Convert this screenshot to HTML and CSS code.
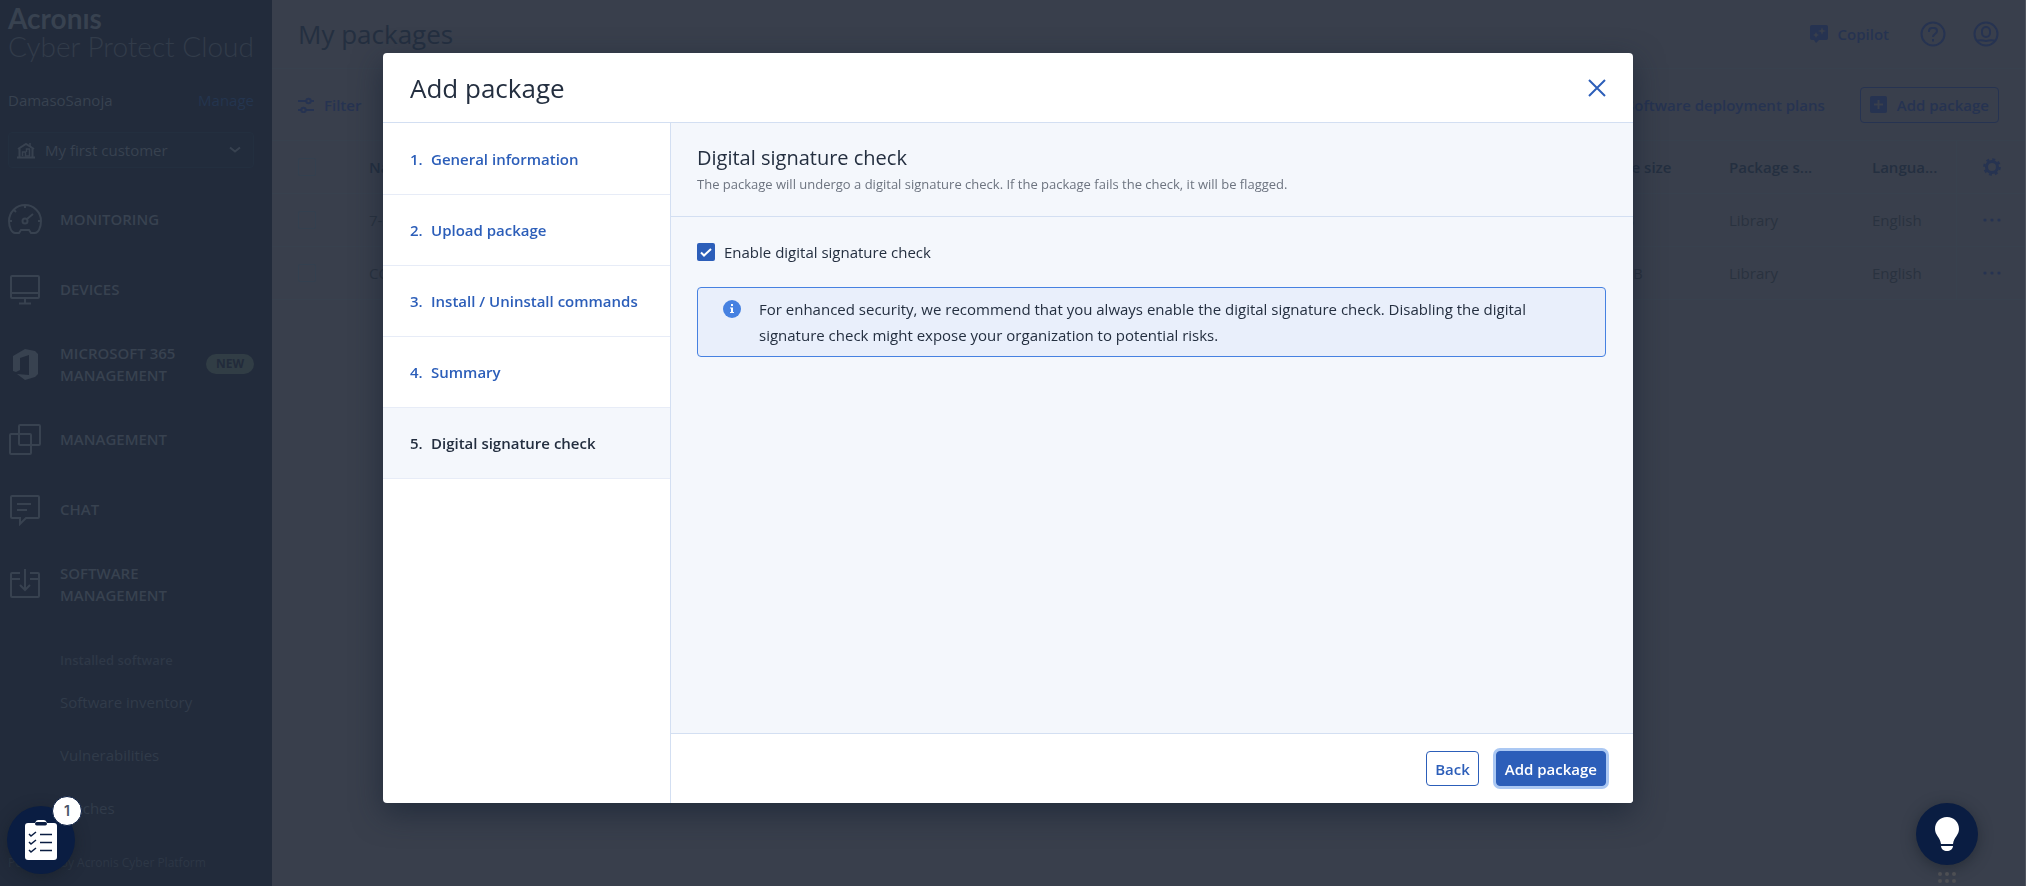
FILE: index.html
```html
<!DOCTYPE html>
<html lang="en">
<head>
<meta charset="utf-8">
<title>Add package</title>
<link rel="stylesheet" href="styles.css">
</head>
<body>
<div class="app">
  <aside class="sidebar">
    <div class="logo">
      <span class="logo-brand">Acronıs</span>
      <span class="logo-product">Cyber Protect Cloud</span>
    </div>
    <div class="account"><span>DamasoSanoja</span><a class="account-link" href="#">Manage</a></div>
    <button class="tenant" type="button">
      <svg width="18" height="18" viewBox="0 0 18 18" fill="none" stroke="currentColor" stroke-width="2"><path d="M1 8 9 3l8 5M2.500 7v9M15.500 7v9M0 16.500h18"/><path stroke-width="1.500" d="M13 2v3M5.500 15v-4h3v4M9.500 11V8h3v7M8 15h5"/></svg>
      <span class="tenant-name">My first customer</span>
      <svg width="12" height="8" viewBox="0 0 12 8" fill="none" stroke="currentColor" stroke-width="2"><path d="m1 1.500 5 4 5-4"/></svg>
    </button>
    <nav class="nav">
      <a class="nav-item" href="#">
        <svg class="nav-icon" viewBox="0 0 34 34"><path d="M7 31h4l2-3h8l2 3h4c3 0 6-5 6-12a16 16 0 0 0-32 0c0 7 3 12 6 12zM17 3v3M1 19h3M30 19h3M6 8l2 2M19 17l6-5"/><circle cx="17" cy="19" r="2.500"/></svg>
        <span>MONITORING</span></a>
      <a class="nav-item" href="#">
        <svg class="nav-icon" viewBox="0 0 34 34"><rect x="3" y="4" width="28" height="22" rx="1"/><path d="M3 21h28M17 26v5M11 31.500h12"/></svg>
        <span>DEVICES</span></a>
      <a class="nav-item" href="#">
        <svg class="nav-icon nav-icon-solid" viewBox="0 0 34 34"><path d="m17 2 10 2 3 3v20l-3 3-10 3-8-6 12 1V8l-9 3v12l-4 2-3-1V9z"/></svg>
        <span class="nav-label">MICROSOFT 365 MANAGEMENT</span><span class="tag">NEW</span></a>
      <a class="nav-item" href="#">
        <svg class="nav-icon" viewBox="0 0 34 34"><rect x="11" y="3" width="21" height="20" rx="1"/><rect x="2" y="12" width="21" height="20" rx="1"/></svg>
        <span>MANAGEMENT</span></a>
      <a class="nav-item" href="#">
        <svg class="nav-icon" viewBox="0 0 34 34"><path d="M4 4h26a1 1 0 0 1 1 1v20a1 1 0 0 1-1 1H18l-6 6v-6H4a1 1 0 0 1-1-1V5a1 1 0 0 1 1-1zM9 12h14M9 18h10"/></svg>
        <span>CHAT</span></a>
      <a class="nav-item" href="#">
        <svg class="nav-icon" viewBox="0 0 34 34"><path d="M12 6H4a1 1 0 0 0-1 1v22a1 1 0 0 0 1 1h26a1 1 0 0 0 1-1V7a1 1 0 0 0-1-1h-8M3 12h9M22 12h9M17 2v21M12 18l5 5 5-5"/></svg>
        <span class="nav-label">SOFTWARE MANAGEMENT</span></a>
    </nav>
    <div class="subnav">
      <h2 class="subnav-title">Installed software</h2>
      <a class="subnav-item" href="#">Software inventory</a>
      <a class="subnav-item" href="#">Vulnerabilities</a>
      <a class="subnav-item" href="#">Patches</a>
    </div>
    <p class="powered">Powered by Acronis Cyber Platform</p>
  </aside>

  <main class="main">
    <header class="topbar">
      <h1 class="page-title">My packages</h1>
      <button class="link-button" type="button">
        <svg width="18" height="18" viewBox="0 0 18 18"><path fill="currentColor" d="M2 0h14a2 2 0 0 1 2 2v11a2 2 0 0 1-2 2H9l-3 3-2-3H2a2 2 0 0 1-2-2V2a2 2 0 0 1 2-2z"/><path class="cutout" d="m12 2 1 3 3 1-3 1-1 3-1-3-3-1 3-1zM6 7l1 2 2 1-2 1-1 2-1-2-2-1 2-1z"/></svg>
        Copilot
      </button>
      <button class="icon-button" type="button" aria-label="Help">
        <svg width="26" height="26" viewBox="0 0 26 26" fill="none" stroke="currentColor" stroke-width="2"><circle cx="13" cy="13" r="11.500"/><path d="M9 11V9.500A3 3 0 0 1 12 7h2a3 3 0 0 1 3 3c0 3-4 3-4 6M13 18v2.500"/></svg>
      </button>
      <button class="icon-button" type="button" aria-label="Profile">
        <svg width="26" height="26" viewBox="0 0 26 26" fill="none" stroke="currentColor" stroke-width="2"><circle cx="13" cy="13" r="11.500"/><rect x="9" y="6" width="8" height="10" rx="4"/><path d="M4 20c4-2 6 0 9 0s5-2 9 0"/></svg>
      </button>
    </header>
    <div class="toolbar">
      <button class="link-button" type="button">
        <svg width="16" height="16" viewBox="0 0 16 16" fill="none" stroke="currentColor" stroke-width="2"><path d="M0 4h8M13 4h3M0 13h3M8 13h8"/><circle cx="10.500" cy="4" r="2.200"/><circle cx="5.500" cy="13" r="2.200"/></svg>
        Filter
      </button>
      <a class="toolbar-link" href="#">Software deployment plans</a>
      <button class="outline-button" type="button">
        <svg width="17" height="17" viewBox="0 0 17 17"><rect width="17" height="17" rx="2" fill="currentColor"/><path class="cutout-line" d="M8.500 4v9M4 8.500h9"/></svg>
        Add package
      </button>
    </div>
    <table class="packages">
      <thead>
        <tr><th class="col-check"><input class="check" type="checkbox" aria-label="Select all"></th><th>Name</th><th class="col-size">Archive size</th><th class="col-meta">Package s...</th><th class="col-lang">Langua...</th>
        <th class="col-actions"><button class="icon-button" type="button" aria-label="Columns"><svg width="18" height="18" viewBox="0 0 18 18" fill="none" stroke="currentColor"><circle cx="9" cy="9" r="5.500" stroke-width="3"/><circle cx="9" cy="9" r="7.800" stroke-width="2" stroke-dasharray="3 3.126"/></svg></button></th></tr>
      </thead>
      <tbody>
        <tr><td><input class="check" type="checkbox" aria-label="Select 7-Zip"></td><td>7-Zip</td><td>1.5 MB</td><td>Library</td><td>English</td><td class="col-actions"><button class="icon-button" type="button" aria-label="More"><svg width="18" height="4" viewBox="0 0 18 4" fill="currentColor"><circle cx="2" cy="2" r="1.600"/><circle cx="9" cy="2" r="1.600"/><circle cx="16" cy="2" r="1.600"/></svg></button></td></tr>
        <tr><td><input class="check" type="checkbox" aria-label="Select CCleaner"></td><td>CCleaner</td><td>69.1 MB</td><td>Library</td><td>English</td><td class="col-actions"><button class="icon-button" type="button" aria-label="More"><svg width="18" height="4" viewBox="0 0 18 4" fill="currentColor"><circle cx="2" cy="2" r="1.600"/><circle cx="9" cy="2" r="1.600"/><circle cx="16" cy="2" r="1.600"/></svg></button></td></tr>
      </tbody>
    </table>
  </main>
</div>

<div class="overlay">
  <section class="dialog" role="dialog" aria-labelledby="dialog-title">
    <header class="dialog-header">
      <h2 class="dialog-title" id="dialog-title">Add package</h2>
      <button class="close" type="button" aria-label="Close"><svg width="18" height="18" viewBox="0 0 18 18" fill="none" stroke="currentColor" stroke-width="2"><path d="m1 1 16 16M17 1 1 17"/></svg></button>
    </header>
    <div class="dialog-body">
      <nav class="steps">
        <a class="step" href="#"><span class="step-number">1.</span>General information</a>
        <a class="step" href="#"><span class="step-number">2.</span>Upload package</a>
        <a class="step" href="#"><span class="step-number">3.</span>Install / Uninstall commands</a>
        <a class="step" href="#"><span class="step-number">4.</span>Summary</a>
        <a class="step step-current" href="#" aria-current="step"><span class="step-number">5.</span>Digital signature check</a>
      </nav>
      <div class="panel">
        <header class="panel-header">
          <h3 class="panel-title">Digital signature check</h3>
          <p class="panel-hint">The package will undergo a digital signature check. If the package fails the check, it will be flagged.</p>
        </header>
        <div class="panel-content">
          <label class="option"><span class="option-box"><input class="option-input" type="checkbox" checked><svg class="option-mark" width="18" height="18" viewBox="0 0 18 18"><path d="m4 9.500 3 3L14 6"/></svg></span>Enable digital signature check</label>
          <div class="notice">
            <svg class="notice-icon" width="18" height="18" viewBox="0 0 18 18"><circle cx="9" cy="9" r="9" fill="#4681e1"/><path fill="#fff" d="M8 4h2v2H8zM7 7.500h3V12h1v1H7v-1h1V8.500H7z"/></svg>
            <p>For enhanced security, we recommend that you always enable the digital signature check. Disabling the digital signature check might expose your organization to potential risks.</p>
          </div>
        </div>
        <footer class="panel-footer">
          <button class="button" type="button">Back</button>
          <button class="button button-primary" type="button">Add package</button>
        </footer>
      </div>
    </div>
  </section>
</div>

<button class="fab fab-tasks" type="button" aria-label="Checklist">
  <svg width="32" height="40" viewBox="0 0 32 40"><rect y="3" width="32" height="37" rx="3" fill="#fff"/><path d="M8 6V4q0-1 2-1 1-3 3-3h6q2 0 3 3 2 0 2 1v2z" fill="#fff"/><rect x="10" y="2" width="12" height="3.500" rx="1.700" fill="#0a1d42"/><path d="M15 14.500h12M15 22.500h12M15 30.500h12M4 14l2 2 5-4M4 22l2 2 5-4M4 30l2 2 5-4" fill="none" stroke="#0a1d42" stroke-width="1.500"/></svg>
  <span class="fab-count">1</span>
</button>
<button class="fab fab-tips" type="button" aria-label="Tips">
  <svg width="24" height="34" viewBox="0 0 24 34"><path fill="#fff" d="M12 0c7 0 12 5 12 12 0 6-5 8-6 15H6C5 20 0 18 0 12 0 5 5 0 12 0zM6 29h12c0 3-3 5-6 5s-6-2-6-5z"/></svg>
</button>
<svg class="grip" width="18" height="11" viewBox="0 0 18 11" fill="#4d4f53"><circle cx="2" cy="2" r="2"/><circle cx="9" cy="2" r="2"/><circle cx="16" cy="2" r="2"/><circle cx="2" cy="9" r="2"/><circle cx="9" cy="9" r="2"/><circle cx="16" cy="9" r="2"/></svg>
</body>
</html>
```
FILE: styles.css
```css
* { box-sizing: border-box; }

body {
  margin: 0;
  height: 100vh;
  overflow: hidden;
  font: 15px/22px "Open Sans", "Noto Sans", sans-serif;
  color: #242f40;
  background: #393f4c;
}

h1, h2, h3, p { margin: 0; font-weight: 400; }
a { color: inherit; text-decoration: none; }
button { font: inherit; color: inherit; background: none; border: 0; padding: 0; }
svg { display: block; flex: none; }

.app { display: flex; height: 100vh; }

/* Sidebar */
.sidebar {
  width: 272px;
  flex: none;
  display: flex;
  flex-direction: column;
  padding: 4px 18px 12px 8px;
  background: #222b3b;
  color: #384250;
}
.logo { display: flex; flex-direction: column; font-family: Lato, sans-serif; }
.logo-brand { font-size: 28px; line-height: 28px; font-weight: 700; }
.logo-product { font-size: 28px; line-height: 28px; font-weight: 300; color: #323c4a; white-space: nowrap; }
.account { display: flex; justify-content: space-between; padding: 29px 0 21px; }
.account-link { color: #24354f; }
.tenant {
  display: flex;
  align-items: center;
  gap: 10px;
  height: 36px;
  padding: 0 12px 0 8px;
  border: 1px solid #232f3f;
  border-radius: 4px;
  background: #222c3c;
}
.tenant-name { flex: 1; text-align: left; }
.nav { display: flex; flex-direction: column; padding-top: 16px; font-weight: 600; }
.nav-item { display: flex; align-items: center; gap: 18px; min-height: 70px; padding: 18px 0; }
.nav-icon { width: 34px; height: 34px; fill: none; stroke: currentColor; stroke-width: 2; }
.nav-icon-solid { fill: currentColor; stroke: none; }
.nav-label { flex: 1; max-width: 140px; }
.tag {
  padding: 0 10px;
  border-radius: 10px;
  background: #313d45;
  color: #222b3b;
  font-size: 12px;
  line-height: 20px;
  font-weight: 700;
}
.subnav { display: flex; flex-direction: column; padding: 24px 0 0 52px; color: #313b4a; }
.subnav-title { font-size: 13px; line-height: 24px; font-weight: 600; padding-bottom: 4px; color: #2e3847; }
.subnav-item { line-height: 53px; }
.powered { margin-top: auto; font-size: 12px; color: #2d3746; }

/* Page behind the dialog */
.main { flex: 1; min-width: 0; border-right: 1px solid #50555f; }
.topbar { display: flex; align-items: center; gap: 27px; height: 69px; padding: 0 26px; border-bottom: 1px solid #38414e; color: #263351; }
.page-title { flex: 1; font-size: 26px; line-height: 36px; color: #242f40; }
.link-button { display: flex; align-items: center; gap: 10px; font-weight: 600; color: #263351; }
.topbar .link-button { margin-right: 4px; }
.cutout { fill: #393f4c; }
.cutout-line { fill: none; stroke: #393f4c; stroke-width: 2; }
.toolbar { display: flex; align-items: center; gap: 35px; height: 71px; padding: 0 26px; color: #263351; font-weight: 600; }
.toolbar-link { margin-left: auto; }
.outline-button { display: flex; align-items: center; gap: 10px; height: 36px; padding: 0 9px; border: 1px solid #263351; border-radius: 4px; }
.packages { width: 100%; table-layout: fixed; border-collapse: collapse; border-top: 1px solid #38414e; }
.packages th, .packages td { height: 53px; padding: 0; text-align: left; border-bottom: 1px solid #38414e; }
.packages th { font-weight: 600; }
.packages td { color: #29323f; }
.packages th:first-child, .packages td:first-child { padding-left: 26px; }
.col-check { width: 97px; }
.col-size, .col-meta { width: 143px; }
.col-lang { width: 84px; }
.packages .col-actions { width: 69px; padding-left: 26px; border-left: 1px solid #38414e; color: #263351; }
.packages .icon-button { display: block; }
.check { appearance: none; display: block; width: 18px; height: 18px; margin: 0; border: 1px solid #34404f; border-radius: 2px; }

/* Dialog */
.overlay { position: fixed; inset: 0; padding: 53px 10px 20px 0; }
.dialog {
  display: flex;
  flex-direction: column;
  max-width: 1250px;
  min-height: 750px;
  margin: 0 auto;
  border-radius: 4px;
  overflow: hidden;
  background: #fff;
  box-shadow: 0 10px 30px rgba(20, 32, 48, .6);
}
.dialog-header { display: flex; align-items: center; justify-content: space-between; height: 70px; padding: 0 27px; border-bottom: 1px solid #d3dff2; }
.dialog-title { font-size: 26px; line-height: 36px; }
.close { color: #2c5eb9; }
.dialog-body { flex: 1; display: flex; }
.steps { width: 288px; flex: none; border-right: 1px solid #d3dff2; font-weight: 600; color: #2c5eb9; }
.step { display: flex; align-items: center; height: 71px; padding: 0 27px; border-bottom: 1px solid #e7ecf7; white-space: nowrap; }
.step:first-child { height: 72px; }
.step-number { flex: none; width: 21px; }
.step-current { background: #f4f7fc; color: #242f40; }
.panel { flex: 1; display: flex; flex-direction: column; background: #f4f7fc; }
.panel-header { padding: 21px 27px 20px 26px; border-bottom: 1px solid #d3dff2; }
.panel-title { font-size: 20px; line-height: 28px; }
.panel-hint { font-size: 13px; line-height: 24px; color: #6d7480; }
.panel-content { flex: 1; padding: 24px 27px 24px 26px; }
.option { display: flex; align-items: center; gap: 9px; }
.option-box { position: relative; }
.option-input { appearance: none; display: block; width: 18px; height: 18px; margin: 0; border-radius: 2px; background: #2c5eb9; }
.option-mark { position: absolute; inset: 0; fill: none; stroke: #fff; stroke-width: 2; pointer-events: none; }
.notice {
  display: flex;
  gap: 18px;
  margin-top: 24px;
  padding: 8px 25px;
  border: 1px solid #4681e1;
  border-radius: 4px;
  background: #e9effb;
  line-height: 26px;
}
.notice-icon { margin-top: 4px; }
.panel-footer { display: flex; justify-content: flex-end; gap: 17px; padding: 17px 27px; background: #fff; border-top: 1px solid #d3dff2; }
.button { height: 35px; padding: 0 8px; border: 1px solid #2c5eb9; border-radius: 4px; color: #2c5eb9; font-weight: 600; }
.button-primary { background: #2c5eb9; color: #fff; box-shadow: 0 0 0 3px #abc8f3; }

/* Floating controls */
.fab { position: fixed; display: flex; align-items: center; justify-content: center; border-radius: 50%; background: #0a1d42; box-shadow: 0 3px 14px rgba(20, 28, 36, .5); }
.fab-tasks { left: 7px; bottom: 12px; width: 68px; height: 68px; }
.fab-tips { right: 48px; bottom: 21px; width: 62px; height: 62px; }
.fab-count {
  position: absolute;
  top: -10px;
  right: -7px;
  width: 30px;
  height: 30px;
  border: 1px solid #0a1d42;
  border-radius: 50%;
  background: #fff;
  color: #4a5468;
  font: 600 14px/28px Inter, sans-serif;
}
.grip { position: fixed; right: 70px; bottom: 3px; }
```
